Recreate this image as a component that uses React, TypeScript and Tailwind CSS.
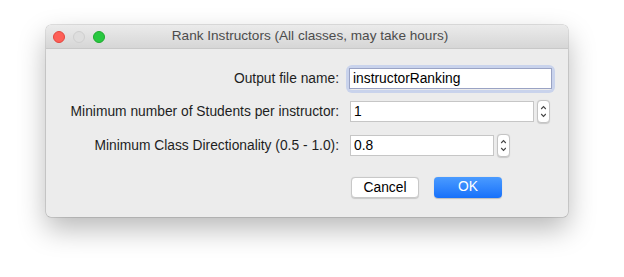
import React from 'react';

function Stepper() {
  return (
    <div className="ml-[3px] flex h-[23px] w-[13px] flex-col items-center justify-center rounded-[4px] border border-[#c4c4c4] bg-white shadow-[0_0.5px_1px_rgba(0,0,0,0.15)]">
      <svg width="7" height="17" viewBox="0 0 7 17">
        <path d="M1.2 6 L3.5 3.6 L5.8 6" fill="none" stroke="#444" strokeWidth="1.1" />
        <path d="M1.2 11 L3.5 13.4 L5.8 11" fill="none" stroke="#444" strokeWidth="1.1" />
      </svg>
    </div>
  );
}

export default function App() {
  return (
    <div className="h-[277px] w-[624px] bg-white pt-[25px] pl-[46px] font-['Liberation_Sans',Arial,sans-serif] text-[13.8px] text-[#1e1e1e]">
      <div className="flex h-[192px] w-[522px] flex-col overflow-hidden rounded-[5px] bg-[#ececec] shadow-[0_12px_28px_rgba(0,0,0,0.28),0_0_0_0.5px_rgba(0,0,0,0.22)]">
        {/* Title bar */}
        <div className="relative flex h-[24px] items-center border-b border-[#c8c8c8] bg-gradient-to-b from-[#ebebeb] to-[#d6d6d6]">
          <div className="flex items-center gap-[8px] pl-[7px]">
            <span className="h-[12px] w-[12px] rounded-full border border-[#e2463f] bg-[#fe5f57]" />
            <span className="h-[12px] w-[12px] rounded-full border border-[#cfcfcf] bg-[#dedede]" />
            <span className="h-[12px] w-[12px] rounded-full border border-[#1eaa2e] bg-[#28c840]" />
          </div>
          <div className="absolute inset-x-0 pl-[6px] text-center text-[13.6px] text-[#4c4c4c]">
            Rank Instructors (All classes, may take hours)
          </div>
        </div>

        {/* Form */}
        <div className="grid grid-cols-[303px_auto] items-center gap-y-[10px] pt-[19px]">
          <div className="pr-[10px] text-right leading-[21px]">Output file name:</div>
          <div className="flex">
            <div className="w-[203px] rounded-[3px] shadow-[0_0_0_3px_#c9d3ec]">
              <input
                readOnly
                value="instructorRanking"
                className="h-[21px] w-full border border-[#9aa3c4] bg-white px-[3px] text-[13.8px] text-black outline-none"
              />
            </div>
          </div>

          <div className="pr-[10px] text-right leading-[21px]">Minimum number of Students per instructor:</div>
          <div className="flex items-center pl-[1px]">
            <input
              readOnly
              value="1"
              className="h-[21px] w-[184px] border border-[#c6c6c6] bg-white px-[3px] text-[13.8px] text-black outline-none"
            />
            <Stepper />
          </div>

          <div className="mt-[1px] pr-[10px] text-right leading-[21px]">Minimum Class Directionality (0.5 - 1.0):</div>
          <div className="mt-[1px] flex items-center pl-[1px]">
            <input
              readOnly
              value="0.8"
              className="h-[21px] w-[144px] border border-[#c6c6c6] bg-white px-[3px] text-[13.8px] text-black outline-none"
            />
            <Stepper />
          </div>
        </div>

        {/* Buttons */}
        <div className="mt-[20px] flex gap-[15px] pl-[305px]">
          <button className="h-[21px] w-[68px] rounded-[4px] border border-[#c8c8c8] bg-white text-[13.8px] text-black shadow-[0_0.5px_1px_rgba(0,0,0,0.15)]">
            Cancel
          </button>
          <button className="h-[21px] w-[68px] rounded-[4px] bg-gradient-to-b from-[#4a9bff] to-[#1670fa] text-[13.8px] text-white shadow-[0_0.5px_1px_rgba(0,0,0,0.2)]">
            OK
          </button>
        </div>
      </div>
    </div>
  );
}
